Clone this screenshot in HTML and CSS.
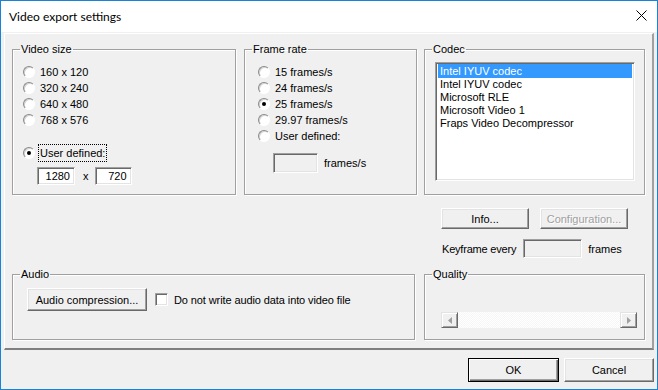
FILE: index.html
```html
<!DOCTYPE html>
<html lang="en">
<head>
<meta charset="UTF-8"/>
<title>Video export settings</title>
<link rel="stylesheet" href="styles.css">
</head>
<body>
<div class="window">
  <!-- Title bar -->
  <div class="titlebar">
    <span class="title">Video export settings</span>
    <svg class="close" width="11" height="11" viewBox="0 0 11 11">
      <path d="M0.5 0.5 L10.5 10.5 M10.5 0.5 L0.5 10.5" stroke="#000" stroke-width="1" fill="none"/>
    </svg>
  </div>

  <div class="panel">
    <!-- Top row: video size, frame rate, codec -->
    <div class="row-top">
      <fieldset class="group g-size">
        <legend>Video size</legend>
        <div class="opts">
          <div class="opt"><span class="radio"></span><span>160 x 120</span></div>
          <div class="opt"><span class="radio"></span><span>320 x 240</span></div>
          <div class="opt"><span class="radio"></span><span>640 x 480</span></div>
          <div class="opt"><span class="radio"></span><span>768 x 576</span></div>
          <div class="opt opt-user"><span class="radio on"></span><span class="focus">User defined:</span></div>
          <div class="dims">
            <span class="edit w-dim">1280</span>
            <span class="times">x</span>
            <span class="edit w-dim2">720</span>
          </div>
        </div>
      </fieldset>

      <fieldset class="group g-rate">
        <legend>Frame rate</legend>
        <div class="opts">
          <div class="opt"><span class="radio"></span><span>15 frames/s</span></div>
          <div class="opt"><span class="radio"></span><span>24 frames/s</span></div>
          <div class="opt"><span class="radio on"></span><span>25 frames/s</span></div>
          <div class="opt"><span class="radio"></span><span>29.97 frames/s</span></div>
          <div class="opt"><span class="radio"></span><span>User defined:</span></div>
          <div class="fps">
            <span class="edit disabled w-fps"></span>
            <span>frames/s</span>
          </div>
        </div>
      </fieldset>

      <fieldset class="group g-codec">
        <legend>Codec</legend>
        <div class="listbox">
          <div class="item sel">Intel IYUV codec</div>
          <div class="item">Intel IYUV codec</div>
          <div class="item">Microsoft RLE</div>
          <div class="item">Microsoft Video 1</div>
          <div class="item">Fraps Video Decompressor</div>
        </div>
      </fieldset>
    </div>

    <!-- Codec buttons + keyframe -->
    <div class="codec-extra">
      <div class="btn-row">
        <span class="btn w-info">Info...</span>
        <span class="btn w-info disabled">Configuration...</span>
      </div>
      <div class="keyframe">
        <span>Keyframe every</span>
        <span class="edit disabled w-key"></span>
        <span>frames</span>
      </div>
    </div>

    <!-- Bottom row: audio, quality -->
    <div class="row-bottom">
      <fieldset class="group g-audio">
        <legend>Audio</legend>
        <div class="audio-line">
          <span class="btn w-audio">Audio compression...</span>
          <span class="check"></span>
          <span class="narrow">Do not write audio data into video file</span>
        </div>
      </fieldset>

      <fieldset class="group g-quality">
        <legend>Quality</legend>
        <div class="scrollbar">
          <span class="arrow">
            <svg width="4" height="7" viewBox="0 0 4 7"><path d="M4 0 L0 3.5 L4 7 Z" fill="#a0a0a0"/></svg>
          </span>
          <span class="track"></span>
          <span class="arrow">
            <svg width="4" height="7" viewBox="0 0 4 7"><path d="M0 0 L4 3.5 L0 7 Z" fill="#a0a0a0"/></svg>
          </span>
        </div>
      </fieldset>
    </div>
  </div>

  <!-- Dialog buttons -->
  <div class="footer">
    <span class="btn default w-ok">OK</span>
    <span class="btn w-cancel">Cancel</span>
  </div>
</div>
</body>
</html>
```

FILE: styles.css
```css
/* Page */
html, body {
  margin:0; padding:0;
  background:#f0f0f0;
}
body {
  font-family:"Liberation Sans", Arial, sans-serif;
  font-size:11px;
  color:#000;
}

/* Window frame */
.window {
  width:658px; height:390px;
  box-sizing:border-box;
  border:1px solid #1883d7;
  background:#f0f0f0;
  display:flex;
  flex-direction:column;
}

/* Title bar */
.titlebar {
  height:31px;
  flex-shrink:0;
  background:#fff;
  display:flex;
  align-items:center;
  justify-content:space-between;
  padding:0 10px 0 8px;
}
.title {
  font-family:Lato, "Noto Sans", sans-serif;
  font-size:12px;
  color:#000;
  margin-top:-1px;
}
.close { display:block; margin-top:-2px; }

/* Raised main panel */
.panel {
  margin:1px 0 0 3px;
  width:650px;
  height:317px;
  box-sizing:border-box;
  border-style:solid;
  border-width:1px 2px 2px 1px;
  border-color:#fff #a0a0a0 #808080 #fff;
  padding:9px 7px 0 7px;
  display:flex;
  flex-direction:column;
}

/* Group boxes */
.group {
  margin:0; padding:0;
  min-width:0;
  box-sizing:border-box;
  border:1px solid #a0a0a0;
  box-shadow:inset 1px 1px 0 #fff, 1px 1px 0 #fff;
}
.group legend {
  margin-left:7px;
  padding:0 1px;
  line-height:13px;
}

.row-top { display:flex; height:152px; }
.g-size  { width:224px; margin-right:8px; }
.g-rate  { width:173px; margin-right:7px; }
.g-codec { width:221px; }

/* Radio lists */
.opts {
  display:flex;
  flex-direction:column;
  padding-top:8px;
}
.g-size .opts { padding-left:10px; }
.g-rate .opts { padding-left:13px; }
.opt {
  display:flex;
  align-items:center;
  height:16px;
  gap:5px;
}
.opt-user { margin-top:17px; }
.radio {
  width:12px; height:12px;
  box-sizing:border-box;
  border-radius:50%;
  background:#fff;
  border:1px solid;
  border-color:#8a8a8a #fff #fff #8a8a8a;
  box-shadow:inset 1px 1px 0 #d4d4d4;
  display:flex;
  align-items:center;
  justify-content:center;
  flex-shrink:0;
}
.radio.on::after {
  content:"";
  width:4px; height:4px;
  border-radius:50%;
  background:#000;
}
.focus {
  outline:1px dotted #000;
  outline-offset:0;
  padding:1px 1px;
  margin-left:-1px;
  line-height:14px;
}

/* Edit boxes */
.edit {
  box-sizing:border-box;
  background:#fff;
  border:1px solid;
  border-color:#a0a0a0 #fff #fff #a0a0a0;
  box-shadow:inset 1px 1px 0 #696969, inset -1px -1px 0 #e3e3e3;
  display:flex;
  align-items:center;
  justify-content:flex-end;
  padding-right:4px;
}
.edit.disabled { background:#f0f0f0; }

.dims {
  display:flex;
  align-items:center;
  margin:6px 0 0 14px;
}
.w-dim  { width:38px; height:18px; }
.w-dim2 { width:37px; height:18px; }
.times { margin:0 6px 0 8px; }

.fps {
  display:flex;
  align-items:center;
  gap:6px;
  margin:9px 0 0 15px;
}
.w-fps { width:45px; height:20px; }

/* Codec list */
.listbox {
  margin:6px 0 0 10px;
  width:200px; height:119px;
  box-sizing:border-box;
  background:#fff;
  border:1px solid;
  border-color:#a0a0a0 #fff #fff #a0a0a0;
  box-shadow:inset 1px 1px 0 #696969, inset -1px -1px 0 #e3e3e3;
  padding:1px 2px;
}
.item {
  height:13px;
  line-height:13px;
  padding-left:2px;
}
.item.sel {
  background:#3399ff;
  color:#fff;
  height:14px;
  line-height:14px;
}

/* Push buttons */
.btn {
  box-sizing:border-box;
  background:#f0f0f0;
  border:1px solid;
  border-color:#fff #696969 #696969 #fff;
  box-shadow:inset -1px -1px 0 #a0a0a0, inset 1px 1px 0 #e3e3e3;
  display:flex;
  align-items:center;
  justify-content:center;
  flex-shrink:0;
}
.btn.disabled {
  color:#a0a0a0;
  text-shadow:1px 1px 0 #fff;
}
.btn.default {
  border:1px solid #000;
  box-shadow:inset 1px 1px 0 #fff, inset -1px -1px 0 #696969, inset -2px -2px 0 #a0a0a0;
}

/* Under the codec box */
.codec-extra {
  height:73px;
  box-sizing:border-box;
  margin-left:429px;
  padding-top:13px;
}
.btn-row { display:flex; gap:11px; }
.w-info { width:88px; height:21px; }
.keyframe {
  display:flex;
  align-items:center;
  margin-top:10px;
  padding-left:1px;
}
.keyframe span:first-child { letter-spacing:-0.2px; }
.w-key { width:59px; height:19px; margin:0 6px 0 7px; }

.row-bottom { display:flex; height:72px; }
.g-audio   { width:403px; margin-right:9px; }
.g-quality { width:221px; }

.audio-line {
  display:flex;
  align-items:center;
  margin:7px 0 0 14px;
}
.w-audio { width:120px; height:23px; }
.check {
  width:13px; height:13px;
  box-sizing:border-box;
  margin:0 6px 0 8px;
  background:#fff;
  border:1px solid;
  border-color:#a0a0a0 #fff #fff #a0a0a0;
  box-shadow:inset 1px 1px 0 #696969, inset -1px -1px 0 #e3e3e3;
}
.narrow { letter-spacing:-0.1px; }

/* Disabled horizontal scrollbar */
.scrollbar {
  display:flex;
  width:196px; height:16px;
  margin:31px 0 0 16px;
}
.arrow {
  width:17px; height:16px;
  box-sizing:border-box;
  background:#f0f0f0;
  border:1px solid;
  border-color:#e3e3e3 #696969 #696969 #e3e3e3;
  box-shadow:inset 1px 1px 0 #fff, inset -1px -1px 0 #a0a0a0;
  display:flex;
  align-items:center;
  justify-content:center;
}
.track {
  flex:1;
  background:repeating-conic-gradient(#f6f6f6 0 25%, #fff 0 50%) 0 0/2px 2px;
}

/* Footer */
.footer {
  display:flex;
  justify-content:flex-end;
  gap:5px;
  padding:8px 3px 0 0;
}
.w-ok     { width:91px; height:24px; }
.w-cancel { width:90px; height:24px; }
```
